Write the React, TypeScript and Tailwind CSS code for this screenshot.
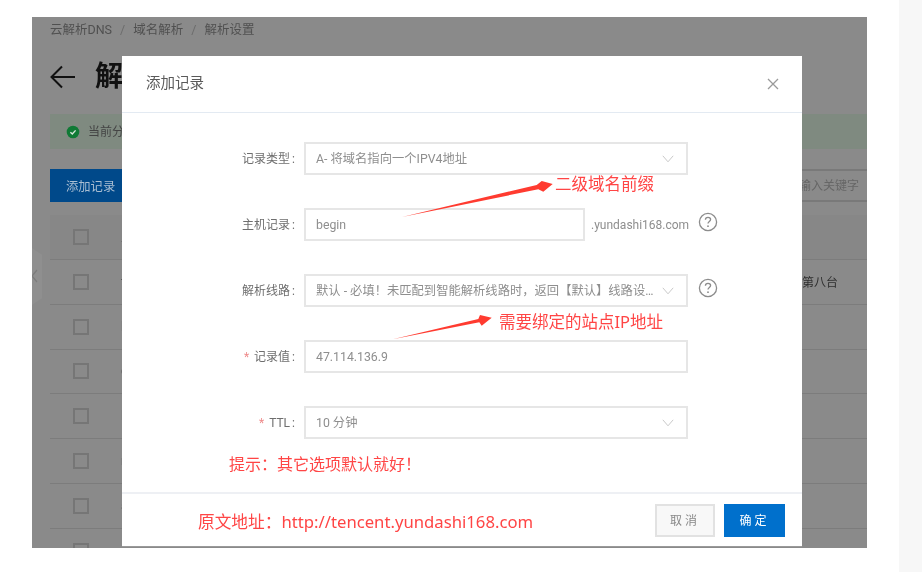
import React from "react";

const FONT = { fontFamily: 'Roboto, "Noto Sans CJK SC", sans-serif' };
const NOTE = { fontFamily: '"Noto Sans", "Noto Sans CJK SC", sans-serif' };

function Chevron() {
  return (
    <svg width="12" height="8" viewBox="0 0 12 8" fill="none" className="absolute top-[11px] right-[12px]">
      <path d="M0.8 0.8 L6 6.8 L11.2 0.8" stroke="#c9c9c9" strokeWidth="1" />
    </svg>
  );
}

function Help() {
  return (
    <svg width="20" height="20" viewBox="0 0 20 20" fill="none" className="shrink-0">
      <circle cx="10" cy="10" r="8.6" stroke="#8c8c8c" strokeWidth="1.3" />
      <path d="M7.4 7.8 C7.4 6.2 8.6 5.4 10 5.4 C11.5 5.4 12.6 6.3 12.6 7.6 C12.6 9.4 10 9.5 10 11.6" stroke="#8c8c8c" strokeWidth="1.3" fill="none" />
      <circle cx="10" cy="14.2" r="0.9" fill="#8c8c8c" />
    </svg>
  );
}

function Row({ label, star, children, extra }: { label: string; star?: boolean; children: React.ReactNode; extra?: React.ReactNode }) {
  return (
    <div className="flex h-[33px] items-center">
      <div className="flex w-[174px] shrink-0 items-center justify-end pr-[9px] text-[12px] text-[#6e6e6e]">
        {star && <span className="mr-[5px] text-[#ee8a8a]">*</span>}
        <span>{label}</span>
        <span className="ml-[2px]">:</span>
      </div>
      {children}
      {extra}
    </div>
  );
}

function Box({ text, select, width = "w-[384px]" }: { text: string; select?: boolean; width?: string }) {
  return (
    <div className={`relative flex h-[33px] ${width} shrink-0 items-center border-2 border-[#e6e6e6] pt-[2px] pl-[10px] text-[12.3px] text-[#8e8e8e]`}>
      <span className="truncate pr-[26px]">{text}</span>
      {select && <Chevron />}
    </div>
  );
}

const rows = ["t", "l", "c", "l", "r", "a", "a"];

export default function App() {
  return (
    <div className="flex h-[572px] w-[922px] overflow-hidden bg-white blur-[0.5px]" style={FONT}>
      <div className="relative mt-[17px] ml-[32px] h-[531px] w-[835px] shrink-0 overflow-hidden bg-[#8a8a8a] pl-[18px]">
        <div className="flex h-[26px] items-center gap-[8px] text-[12.5px] text-[#505050]">
          <span>云解析DNS</span>
          <span className="text-[#6c6c6c]">/</span>
          <span>域名解析</span>
          <span className="text-[#6c6c6c]">/</span>
          <span>解析设置</span>
        </div>
        <div className="mt-[16px] flex h-[36px] items-center">
          <svg width="26" height="26" viewBox="0 0 26 26" fill="none">
            <path d="M25 13 H2 M12 2.5 L1.5 13 L12 23.5" stroke="#111" strokeWidth="2" />
          </svg>
          <span className="ml-[19px] text-[28px] leading-none font-bold text-[#111]">解析设置</span>
        </div>
        <div className="mt-[19px] flex h-[35px] items-center bg-[#7f8a80] pl-[16px] text-[12px] text-[#444]">
          <svg width="14" height="14" viewBox="0 0 14 14">
            <circle cx="7" cy="7" r="6.3" fill="#0f7a35" />
            <path d="M4.4 7.2 L6.3 9 L9.6 5.4" stroke="#d7e6da" strokeWidth="1.4" fill="none" />
          </svg>
          <span className="ml-[8px]">当前分配的DNS服务器</span>
        </div>
        <div className="mt-[20px] flex h-[33px] items-stretch justify-between">
          <div className="flex w-[72px] items-center bg-[#00498a] pt-[3px] pl-[16px] text-[12.3px] text-[#a9bed2]">添加记录</div>
          <div className="flex w-[220px] items-center justify-end border-y-2 border-[#797979] pr-[8px] text-[12px] text-[#666]">请输入关键字</div>
        </div>
        <div className="mt-[13px] flex h-[45px] items-center border-b border-[#7c7c7c] bg-[#878787] pl-[23px]">
          <div className="size-[16px] border-2 border-[#767676]" />
          <span className="ml-[32px] text-[12px] text-[#555]">主机记录</span>
        </div>
        {rows.map((r, i) => (
          <div key={i} className="relative flex h-[44.8px] items-center border-b border-[#7c7c7c] pl-[23px]">
            <div className="size-[16px] border-2 border-[#767676]" />
            <span className="ml-[32px] text-[12px] text-[#555]">{r}</span>
            {i === 0 && <span className="absolute left-[752px] pt-[2px] text-[12px] whitespace-nowrap text-[#2f2f2f]">第八台</span>}
          </div>
        ))}
        <div className="absolute top-[231px] left-0 h-[57px] w-[10px] bg-[#8f8f8f] [clip-path:polygon(0_0,100%_12%,100%_88%,0_100%)]">
          <svg width="6" height="14" viewBox="0 0 6 14" fill="none" className="mt-[21px]">
            <path d="M5 1 L0 7 L5 13" stroke="#7c7c7c" strokeWidth="1.2" />
          </svg>
        </div>

        <div className="absolute top-[39px] left-[90px] flex h-[491px] w-[680px] flex-col border-b border-[#9a9a9a] bg-white">
          <div className="flex h-[57px] shrink-0 items-center justify-between border-b border-[#e3eaf2] pr-[23px] pl-[24px]">
            <span className="text-[14.5px] text-[#5a5a5a]">添加记录</span>
            <svg width="12" height="12" viewBox="0 0 12 12" fill="none">
              <path d="M1 1 L11 11 M11 1 L1 11" stroke="#9a9a9a" strokeWidth="1.3" />
            </svg>
          </div>
          <div className="flex flex-1 flex-col gap-[33px] pt-[29px] pl-[8px]">
            <Row label="记录类型">
              <Box text="A- 将域名指向一个IPV4地址" select />
            </Row>
            <Row
              label="主机记录"
              extra={
                <div className="-mt-[5px] ml-[10px]">
                  <Help />
                </div>
              }
            >
              <Box text="begin" width="w-[281px]" />
              <span className="ml-[6px] w-[97px] shrink-0 pt-[1px] text-[12px] whitespace-nowrap text-[#8e8e8e]">.yundashi168.com</span>
            </Row>
            <Row
              label="解析线路"
              extra={
                <div className="-mt-[5px] ml-[10px]">
                  <Help />
                </div>
              }
            >
              <Box text="默认 - 必填！未匹配到智能解析线路时，返回【默认】线路设置结果" select />
            </Row>
            <Row label="记录值" star>
              <Box text="47.114.136.9" />
            </Row>
            <Row label="TTL" star>
              <Box text="10 分钟" select />
            </Row>
          </div>
          <div className="flex h-[54px] shrink-0 items-start justify-end gap-[9px] border-t-2 border-[#eef0f4] pt-[10px] pr-[17px]">
            <div className="flex h-[33px] w-[60px] items-center justify-center border-2 border-[#e2e2e2] bg-[#f8f8f8] text-[12px] tracking-[3px] text-[#888]">取消</div>
            <div className="flex h-[33px] w-[61px] items-center justify-center bg-[#0070cc] text-[12px] tracking-[3px] text-white">确定</div>
          </div>
        </div>

        <svg width="835" height="531" viewBox="0 0 835 531" className="pointer-events-none absolute top-0 left-0">
          <polygon points="370,200 504.7,168 509.7,164 520.7,167 511.3,174.7 506.3,172.3" fill="#ff3b30" />
          <polygon points="360.7,322.3 446.3,302 448,298 459.7,300.7 449.7,308.7 447.3,305.3" fill="#ff3b30" />
        </svg>
        <span className="absolute top-[155px] left-[523px] text-[16.5px] leading-[24px] whitespace-nowrap text-[#ff4545]" style={NOTE}>二级域名前缀</span>
        <span className="absolute top-[293px] left-[467px] text-[16.5px] leading-[24px] whitespace-nowrap text-[#ff4545]" style={NOTE}>需要绑定的站点IP地址</span>
        <span className="absolute top-[435px] left-[197px] text-[16px] leading-[24px] whitespace-nowrap text-[#ff4545]" style={NOTE}>提示：其它选项默认就好！</span>
        <span className="absolute top-[493px] left-[166px] text-[16.7px] leading-[24px] whitespace-nowrap text-[#ff4545]" style={NOTE}>原文地址：http://tencent.yundashi168.com</span>
      </div>
      <div className="ml-auto h-full w-[23px] bg-[#f7f7f7]" />
    </div>
  );
}
